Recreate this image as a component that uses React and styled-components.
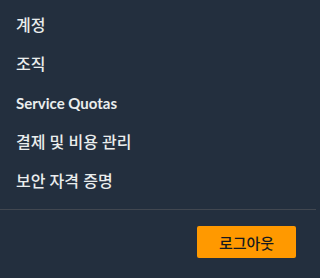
import React from "react";
import styled, { createGlobalStyle } from "styled-components";

const GlobalStyle = createGlobalStyle`
  html, body {
    margin: 0;
    padding: 0;
    background: #232f3e;
  }
  body {
    font-family: "Noto Sans", "Noto Sans CJK KR", sans-serif;
  }
`;

const Panel = styled.div`
  display: flex;
  flex-direction: column;
  width: 316px;
  height: 278px;
  background-color: #232f3e;
  box-sizing: border-box;
`;

const MenuList = styled.ul`
  list-style: none;
  margin: 0;
  padding: 6px 0 8px;
  border-bottom: 1px solid #414750;
`;

const MenuItem = styled.li`
  padding: 8px 16px;
  height: 23px;
  line-height: 23px;
  font-family: ${(p) =>
    p.$latin ? `Lato, "Noto Sans", sans-serif` : `"Noto Sans", "Noto Sans CJK KR", sans-serif`};
  font-size: ${(p) => (p.$latin ? "15px" : "16px")};
  font-weight: ${(p) => (p.$latin ? 700 : 500)};
  color: #eaeded;
  cursor: pointer;
`;

const Footer = styled.div`
  display: flex;
  justify-content: flex-end;
  padding: 16px 20px 0;
`;

const SignOutButton = styled.button`
  width: 99px;
  height: 32px;
  padding: 0;
  border: none;
  border-radius: 2px;
  background-color: #ff9900;
  color: #16191f;
  font-family: "Noto Sans", "Noto Sans CJK KR", sans-serif;
  font-size: 15px;
  font-weight: 500;
  cursor: pointer;
`;

const items = [
  { label: "계정" },
  { label: "조직" },
  { label: "Service Quotas", latin: true },
  { label: "결제 및 비용 관리" },
  { label: "보안 자격 증명" },
];

function App() {
  return (
    <Panel>
      <GlobalStyle />
      <MenuList>
        {items.map((item) => (
          <MenuItem key={item.label} $latin={item.latin}>
            {item.label}
          </MenuItem>
        ))}
      </MenuList>
      <Footer>
        <SignOutButton>로그아웃</SignOutButton>
      </Footer>
    </Panel>
  );
}

export default App;
